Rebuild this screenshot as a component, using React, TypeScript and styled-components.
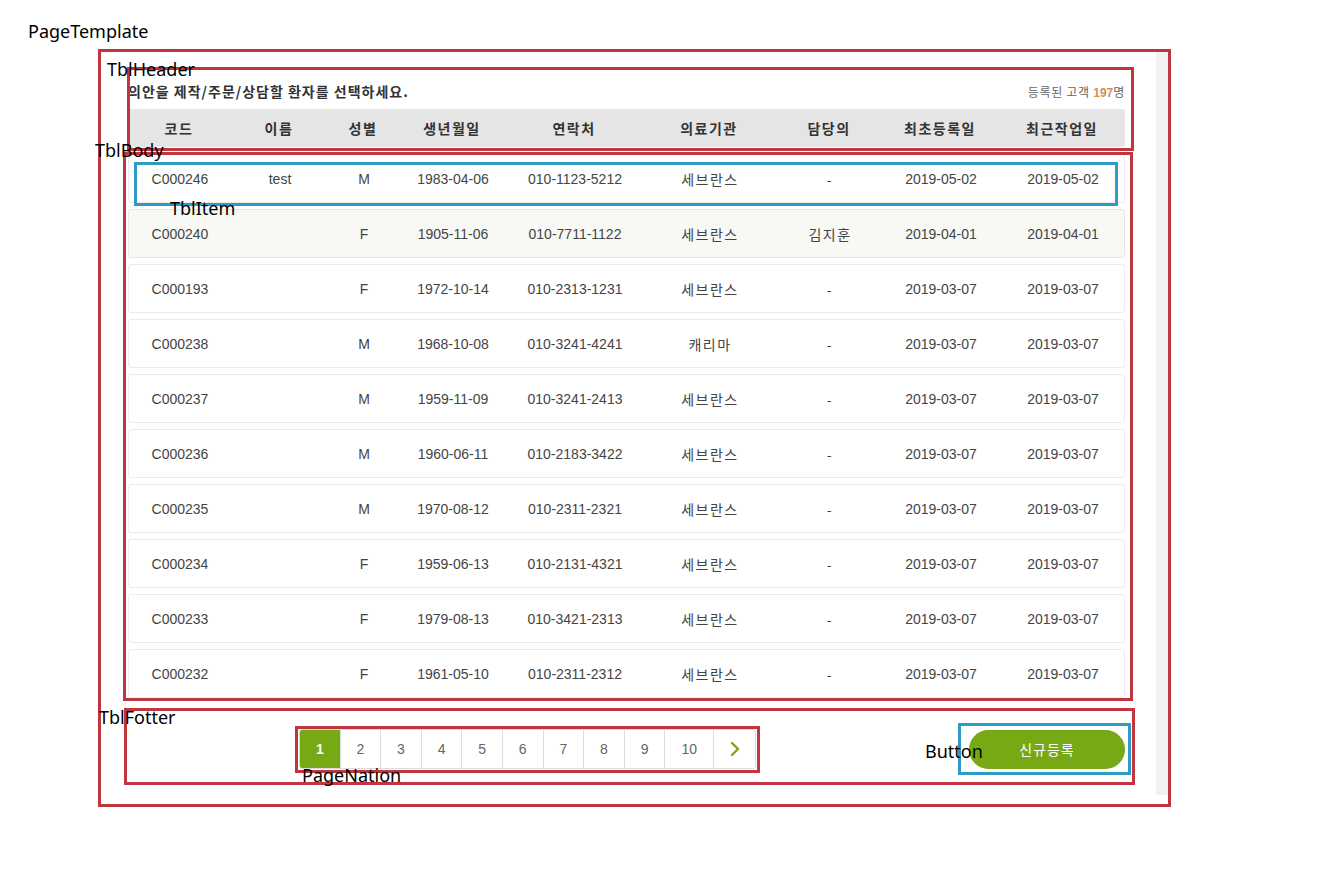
import styled, { createGlobalStyle } from 'styled-components'
import { ChevronRight } from 'lucide-react'

const GREEN = '#77a914'
const RED = '#c0363e'
const BLUE = '#2e9ac6'

interface Patient {
    code: string
    name: string
    gender: string
    birth: string
    phone: string
    hospital: string
    doctor: string
    firstDate: string
    lastDate: string
}

const columns = ['코드', '이름', '성별', '생년월일', '연락처', '의료기관', '담당의', '최초등록일', '최근작업일']

const patients: Patient[] = [
    { code: 'C000246', name: 'test', gender: 'M', birth: '1983-04-06', phone: '010-1123-5212', hospital: '세브란스', doctor: '-', firstDate: '2019-05-02', lastDate: '2019-05-02' },
    { code: 'C000240', name: '', gender: 'F', birth: '1905-11-06', phone: '010-7711-1122', hospital: '세브란스', doctor: '김지훈', firstDate: '2019-04-01', lastDate: '2019-04-01' },
    { code: 'C000193', name: '', gender: 'F', birth: '1972-10-14', phone: '010-2313-1231', hospital: '세브란스', doctor: '-', firstDate: '2019-03-07', lastDate: '2019-03-07' },
    { code: 'C000238', name: '', gender: 'M', birth: '1968-10-08', phone: '010-3241-4241', hospital: '캐리마', doctor: '-', firstDate: '2019-03-07', lastDate: '2019-03-07' },
    { code: 'C000237', name: '', gender: 'M', birth: '1959-11-09', phone: '010-3241-2413', hospital: '세브란스', doctor: '-', firstDate: '2019-03-07', lastDate: '2019-03-07' },
    { code: 'C000236', name: '', gender: 'M', birth: '1960-06-11', phone: '010-2183-3422', hospital: '세브란스', doctor: '-', firstDate: '2019-03-07', lastDate: '2019-03-07' },
    { code: 'C000235', name: '', gender: 'M', birth: '1970-08-12', phone: '010-2311-2321', hospital: '세브란스', doctor: '-', firstDate: '2019-03-07', lastDate: '2019-03-07' },
    { code: 'C000234', name: '', gender: 'F', birth: '1959-06-13', phone: '010-2131-4321', hospital: '세브란스', doctor: '-', firstDate: '2019-03-07', lastDate: '2019-03-07' },
    { code: 'C000233', name: '', gender: 'F', birth: '1979-08-13', phone: '010-3421-2313', hospital: '세브란스', doctor: '-', firstDate: '2019-03-07', lastDate: '2019-03-07' },
    { code: 'C000232', name: '', gender: 'F', birth: '1961-05-10', phone: '010-2311-2312', hospital: '세브란스', doctor: '-', firstDate: '2019-03-07', lastDate: '2019-03-07' },
]

const pages = [1, 2, 3, 4, 5, 6, 7, 8, 9, 10]

// annotation marks drawn over the screen (boxes + their names)
interface Mark {
    x: number
    y: number
    w: number
    h: number
    color: string
}
const marks: Mark[] = [
    { x: 98, y: 49, w: 1073, h: 758, color: RED },
    { x: 127, y: 67, w: 1007, h: 84, color: RED },
    { x: 123, y: 152, w: 1010, h: 549, color: RED },
    { x: 134, y: 162, w: 984, h: 44, color: BLUE },
    { x: 124, y: 708, w: 1011, h: 77, color: RED },
    { x: 295, y: 726, w: 465, h: 47, color: RED },
    { x: 958, y: 723, w: 173, h: 52, color: BLUE },
]
const labels = [
    { x: 28, y: 22, text: 'PageTemplate' },
    { x: 107, y: 60, text: 'TblHeader' },
    { x: 95, y: 141, text: 'TblBody' },
    { x: 170, y: 199, text: 'TblItem' },
    { x: 99, y: 708, text: 'TblFotter' },
    { x: 302, y: 766, text: 'PageNation' },
    { x: 925, y: 742, text: 'Button' },
]

export default function App() {
    return (
        <>
            <GlobalStyle />
            <Canvas>
                <PageTemplate>
                    <Content>
                        <TitleRow>
                            <Title>의안을 제작/주문/상담할 환자를 선택하세요.</Title>
                            <Count>
                                등록된 고객 <b>197</b>명
                            </Count>
                        </TitleRow>
                        <HeadBar>
                            {columns.map((c) => (
                                <span key={c}>{c}</span>
                            ))}
                        </HeadBar>
                        <TblBody>
                            {patients.map((p, i) => (
                                <TblItem key={p.code} $hover={i === 1}>
                                    <span>{p.code}</span>
                                    <span>{p.name}</span>
                                    <span>{p.gender}</span>
                                    <span>{p.birth}</span>
                                    <span>{p.phone}</span>
                                    <KoCell>{p.hospital}</KoCell>
                                    <KoCell>{p.doctor}</KoCell>
                                    <span>{p.firstDate}</span>
                                    <span>{p.lastDate}</span>
                                </TblItem>
                            ))}
                        </TblBody>
                        <TblFooter>
                            <PageNation>
                                {pages.map((n) => (
                                    <PageCell key={n} $active={n === 1} $width={n === 10 ? 48 : 39.6}>
                                        {n}
                                    </PageCell>
                                ))}
                                <PageCell $width={41}>
                                    <ChevronRight size={24} strokeWidth={2.4} color={GREEN} />
                                </PageCell>
                            </PageNation>
                            <NewButton>신규등록</NewButton>
                        </TblFooter>
                    </Content>
                    <ScrollTrack />
                </PageTemplate>

                {marks.map((m, i) => (
                    <MarkBox key={i} $x={m.x} $y={m.y} $w={m.w} $h={m.h} $color={m.color} />
                ))}
                {labels.map((l) => (
                    <MarkLabel key={l.text} $x={l.x} $y={l.y}>
                        {l.text}
                    </MarkLabel>
                ))}
            </Canvas>
        </>
    )
}

const GlobalStyle = createGlobalStyle`
    html, body {
        margin: 0;
        padding: 0;
        background: #fff;
    }
    body {
        font-family: "Liberation Sans", "Noto Sans CJK KR", sans-serif;
    }
`
const Canvas = styled.div`
    position: relative;
    width: 1330px;
    height: 896px;
    box-sizing: border-box;
    padding: 50px 0 0 100px;
    overflow: hidden;
`
const PageTemplate = styled.div`
    width: 1068px;
    height: 745px;
    display: flex;
    background: #fff;
`
const Content = styled.div`
    flex: 1;
    display: flex;
    flex-direction: column;
    padding: 32px 31px 0 28px;
`
const ScrollTrack = styled.div`
    width: 12px;
    background: #f2f2f2;
`
const TitleRow = styled.div`
    height: 18px;
    display: flex;
    align-items: center;
    justify-content: space-between;
`
const Title = styled.h2`
    margin: 0;
    font-family: "Noto Sans CJK KR", sans-serif;
    font-size: 14px;
    font-weight: 700;
    color: #333;
    letter-spacing: 1px;
`
const Count = styled.span`
    font-family: "Noto Sans CJK KR", sans-serif;
    font-size: 12px;
    color: #666;
    letter-spacing: 0.7px;
    b {
        font-family: "Liberation Sans", sans-serif;
        font-weight: 700;
        color: #d38f55;
        letter-spacing: 0;
    }
`
const gridCols = `
    display: grid;
    grid-template-columns: 72px 128px 40px 138px 106px 164px 76px 146px 98px;
    padding-left: 15px;
    align-items: center;
    justify-items: center;
    white-space: nowrap;
`
const HeadBar = styled.div`
    ${gridCols}
    margin-top: 9px;
    height: 38px;
    background: #e5e5e5;
    border-radius: 3px;
    font-family: "Noto Sans CJK KR", sans-serif;
    font-size: 14px;
    font-weight: 700;
    color: #333;
    letter-spacing: 1.5px;
`
const TblBody = styled.div`
    margin-top: 7px;
    display: flex;
    flex-direction: column;
    gap: 6px;
`
const TblItem = styled.div<{ $hover?: boolean }>`
    ${gridCols}
    box-sizing: border-box;
    height: 49px;
    border: 1px solid ${(p) => (p.$hover ? '#e4e7de' : '#ececec')};
    border-radius: 3px;
    background: ${(p) => (p.$hover ? '#f8f9f4' : '#fff')};
    font-size: 14px;
    color: #444;
`
const KoCell = styled.span`
    font-family: "Noto Sans CJK KR", sans-serif;
    letter-spacing: 1.5px;
`
const TblFooter = styled.div`
    margin-top: 31px;
    display: flex;
    align-items: center;
`
const PageNation = styled.nav`
    margin-left: 171px;
    display: flex;
    height: 40px;
    box-sizing: border-box;
    border: 1px solid #dcdcdc;
    border-radius: 3px;
    overflow: hidden;
`
const PageCell = styled.div<{ $active?: boolean; $width: number }>`
    width: ${(p) => p.$width}px;
    display: flex;
    align-items: center;
    justify-content: center;
    font-size: 14px;
    color: ${(p) => (p.$active ? '#fff' : '#666')};
    font-weight: ${(p) => (p.$active ? 700 : 400)};
    background: ${(p) => (p.$active ? GREEN : '#fff')};
    & + & {
        border-left: 1px solid #dcdcdc;
    }
`
const NewButton = styled.button`
    margin-left: auto;
    width: 156px;
    height: 39px;
    border: none;
    border-radius: 20px;
    background: ${GREEN};
    color: #fff;
    font-family: "Noto Sans CJK KR", sans-serif;
    font-size: 14px;
    letter-spacing: 1px;
    cursor: pointer;
`
const MarkBox = styled.div<{ $x: number; $y: number; $w: number; $h: number; $color: string }>`
    position: absolute;
    left: ${(p) => p.$x}px;
    top: ${(p) => p.$y}px;
    width: ${(p) => p.$w}px;
    height: ${(p) => p.$h}px;
    box-sizing: border-box;
    border: 3px solid ${(p) => p.$color};
    pointer-events: none;
`
const MarkLabel = styled.span<{ $x: number; $y: number }>`
    position: absolute;
    left: ${(p) => p.$x}px;
    top: ${(p) => p.$y}px;
    font-family: "Noto Sans", sans-serif;
    font-size: 18px;
    line-height: 18px;
    color: #000;
    white-space: nowrap;
`
